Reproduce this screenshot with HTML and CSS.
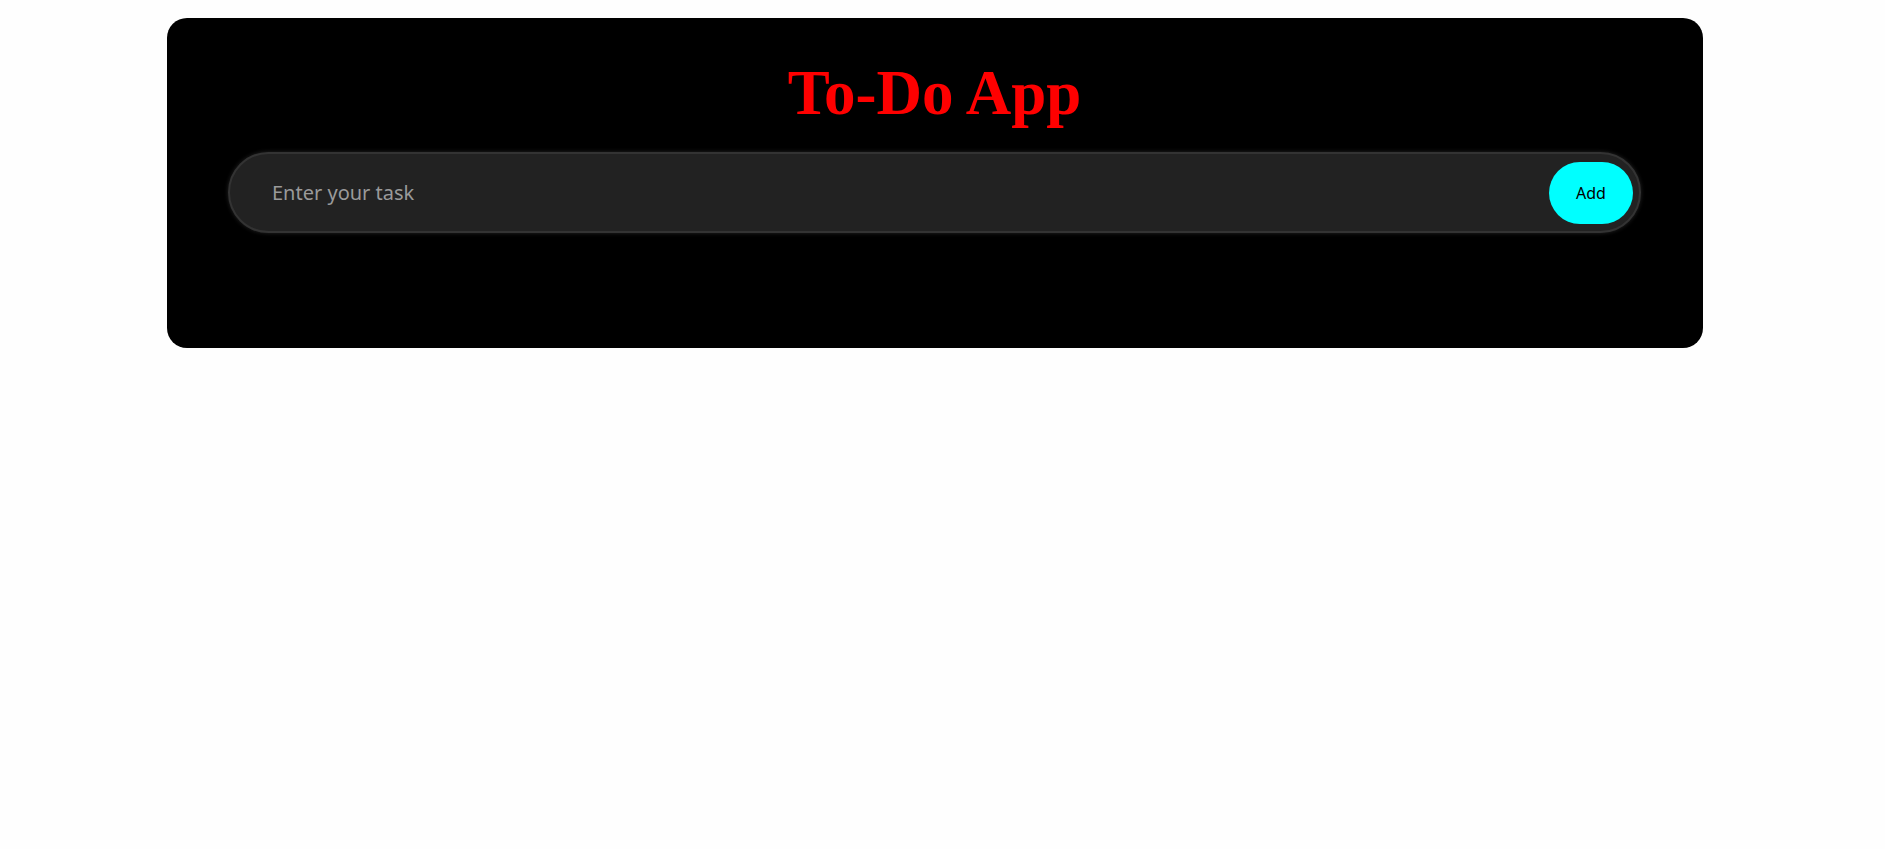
FILE: index.html
```html
<!DOCTYPE html>
<html>
<head>
<meta charset="utf-8">
<link rel="stylesheet" href="styles.css">
</head>
<body>
<div class="card">
  <h1 class="title">To-Do App</h1>
  <div class="input-row">
    <input class="task-input" type="text" placeholder="Enter your task">
    <button class="add-btn">Add</button>
  </div>
</div>
</body>
</html>
```
FILE: styles.css
```css
html, body { margin: 0; padding: 0; background: #fefefe; }
body { padding: 18px 0 0 167px; }
.card {
  width: 1536px;
  height: 330px;
  box-sizing: border-box;
  background: #000;
  border-radius: 20px;
  padding: 39px 62px 0 61px;
}
.title {
  margin: 0;
  text-align: center;
  color: #ff0000;
  font-family: "Liberation Serif", "Times New Roman", serif;
  font-weight: bold;
  font-size: 63px;
  line-height: 72px;
}
.input-row {
  margin-top: 23px;
  height: 81px;
  box-sizing: border-box;
  display: flex;
  align-items: center;
  background: #222;
  border: 2px solid #333;
  border-radius: 41px;
  box-shadow: 0 0 4px rgba(255,255,255,0.15);
  padding: 0 6px 0 42px;
}
.task-input {
  flex: 1;
  background: transparent;
  border: none;
  outline: none;
  color: #ddd;
  font-family: "Noto Sans", "DejaVu Sans", sans-serif;
  font-size: 20px;
  padding: 0;
}
.task-input::placeholder { color: #9a9a9a; }
.add-btn {
  width: 84px;
  height: 62px;
  border: none;
  border-radius: 31px;
  background: #00ffff;
  color: #000;
  font-family: "Noto Sans", "DejaVu Sans", sans-serif;
  font-size: 16px;
  padding: 0;
}
```
